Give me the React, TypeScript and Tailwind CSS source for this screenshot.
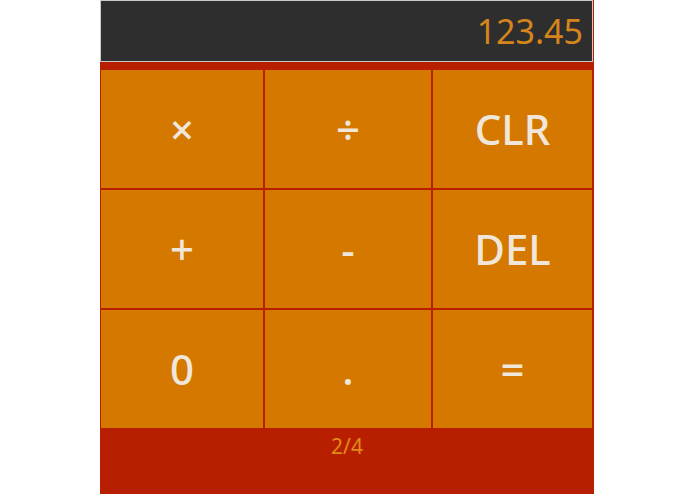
const KEYS = [
  ['×', '÷', 'CLR'],
  ['+', '-', 'DEL'],
  ['0', '.', '='],
];

export default function App() {
  return (
    <div className="flex h-[494px] w-[695px] bg-white pl-[100px] font-['Noto_Sans',sans-serif]">
      <div className="flex w-[494px] flex-col bg-[#b81f00]">
        {/* Display */}
        <div className="flex h-[62px] w-[493px] items-center justify-end border border-[#c9c9c9] bg-[#2e2e2e] pr-[9px]">
          <span className="text-[34px] leading-none text-[#d6851c]">123.45</span>
        </div>

        {/* Keypad */}
        <div className="mt-[8px] grid grid-cols-[162px_166px_159px] gap-[2px] px-[1px]">
          {KEYS.flat().map((k) => (
            <div
              key={k}
              className="flex h-[118px] items-center justify-center bg-[#d47800] text-[42px] font-medium leading-none text-[#f0e6da]"
            >
              {k}
            </div>
          ))}
        </div>

        {/* Page indicator */}
        <div className="pt-[7px] text-center text-[21px] leading-[22px] text-[#e08a1a]">2/4</div>
      </div>
    </div>
  );
}
